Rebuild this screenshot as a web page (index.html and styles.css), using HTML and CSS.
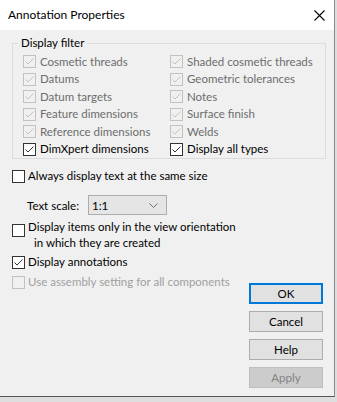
FILE: index.html
```html
<!DOCTYPE html>
<html>
<head>
<meta charset="utf-8">
<link rel="stylesheet" href="styles.css">
</head>
<body>
<div class="window">
  <div class="titlebar">
    <span class="title">Annotation Properties</span>
    <svg class="close" width="11" height="11" viewBox="0 0 11 11"><path d="M0.5 0.5 L10.5 10.5 M10.5 0.5 L0.5 10.5" stroke="#000" stroke-width="1.1" fill="none"/></svg>
  </div>
  <div class="body">
    <div class="group">
      <div class="legend">Display filter</div>
      <div class="grid">
        <div class="cb dis"><span class="box"><svg width="11" height="11" viewBox="0 0 11 11"><path d="M1.5 5.5 L4 8 L9.5 2.5" fill="none" stroke-width="1"/></svg></span>Cosmetic threads</div>
        <div class="cb dis"><span class="box"><svg width="11" height="11" viewBox="0 0 11 11"><path d="M1.5 5.5 L4 8 L9.5 2.5" fill="none" stroke-width="1"/></svg></span>Shaded cosmetic threads</div>
        <div class="cb dis"><span class="box"><svg width="11" height="11" viewBox="0 0 11 11"><path d="M1.5 5.5 L4 8 L9.5 2.5" fill="none" stroke-width="1"/></svg></span>Datums</div>
        <div class="cb dis"><span class="box"><svg width="11" height="11" viewBox="0 0 11 11"><path d="M1.5 5.5 L4 8 L9.5 2.5" fill="none" stroke-width="1"/></svg></span>Geometric tolerances</div>
        <div class="cb dis"><span class="box"><svg width="11" height="11" viewBox="0 0 11 11"><path d="M1.5 5.5 L4 8 L9.5 2.5" fill="none" stroke-width="1"/></svg></span>Datum targets</div>
        <div class="cb dis"><span class="box"><svg width="11" height="11" viewBox="0 0 11 11"><path d="M1.5 5.5 L4 8 L9.5 2.5" fill="none" stroke-width="1"/></svg></span>Notes</div>
        <div class="cb dis"><span class="box"><svg width="11" height="11" viewBox="0 0 11 11"><path d="M1.5 5.5 L4 8 L9.5 2.5" fill="none" stroke-width="1"/></svg></span>Feature dimensions</div>
        <div class="cb dis"><span class="box"><svg width="11" height="11" viewBox="0 0 11 11"><path d="M1.5 5.5 L4 8 L9.5 2.5" fill="none" stroke-width="1"/></svg></span>Surface finish</div>
        <div class="cb dis"><span class="box"><svg width="11" height="11" viewBox="0 0 11 11"><path d="M1.5 5.5 L4 8 L9.5 2.5" fill="none" stroke-width="1"/></svg></span>Reference dimensions</div>
        <div class="cb dis"><span class="box"><svg width="11" height="11" viewBox="0 0 11 11"><path d="M1.5 5.5 L4 8 L9.5 2.5" fill="none" stroke-width="1"/></svg></span>Welds</div>
        <div class="cb"><span class="box"><svg width="11" height="11" viewBox="0 0 11 11"><path d="M1.5 5.5 L4 8 L9.5 2.5" fill="none" stroke-width="1"/></svg></span>DimXpert dimensions</div>
        <div class="cb"><span class="box"><svg width="11" height="11" viewBox="0 0 11 11"><path d="M1.5 5.5 L4 8 L9.5 2.5" fill="none" stroke-width="1"/></svg></span>Display all types</div>
      </div>
    </div>
    <div class="lower">
      <div class="options">
        <div class="cb main row-always"><span class="box"></span>Always display text at the same size</div>
        <div class="scale-row">
          <span class="scale-label">Text scale:</span>
          <div class="select"><span>1:1</span><svg width="9" height="5" viewBox="0 0 9 5"><path d="M0.5 0.5 L4.5 4.5 L8.5 0.5" fill="none" stroke="#707070" stroke-width="1"/></svg></div>
        </div>
        <div class="cb main multi row-items"><span class="box"></span><div class="lines"><div>Display items only in the view orientation</div><div class="indent">in which they are created</div></div></div>
        <div class="cb main row-annot"><span class="box"><svg width="11" height="11" viewBox="0 0 11 11"><path d="M1.5 5.5 L4 8 L9.5 2.5" fill="none" stroke-width="1"/></svg></span>Display annotations</div>
        <div class="cb main dis light row-asm"><span class="box"></span>Use assembly setting for all components</div>
      </div>
      <div class="buttons">
        <div class="btn default">OK</div>
        <div class="btn">Cancel</div>
        <div class="btn">Help</div>
        <div class="btn disabled">Apply</div>
      </div>
    </div>
  </div>
</div>
</body>
</html>
```

FILE: styles.css
```css
html, body {
  margin: 0;
  padding: 0;
}
body {
  background: #dedede;
  font-family: Lato, "Noto Sans", sans-serif;
  font-size: 11.5px;
  color: #000;
  width: 337px;
  height: 402px;
  overflow: hidden;
}
.window {
  width: 334px;
  height: 396px;
  background: #f0f0f0;
  border-right: 1px solid #8a8a8a;
  border-bottom: 1px solid #555;
  display: flex;
  flex-direction: column;
}
.titlebar {
  height: 30px;
  flex: none;
  background: #fff;
  display: flex;
  align-items: center;
  justify-content: space-between;
  padding: 0 9px 0 8px;
}
.title {
  font-size: 12px;
  line-height: 16px;
}
.close {
  display: block;
}
.body {
  flex: 1;
}
.group {
  margin: 13px 8px 0 12px;
  border: 1px solid #dcdcdc;
  height: 114px;
}
.legend {
  width: fit-content;
  margin: -9px 0 0 5px;
  padding: 0 3px;
  background: #f0f0f0;
  line-height: 16px;
  height: 16px;
}
.grid {
  margin-top: 2px;
  padding-left: 10px;
  display: grid;
  grid-template-columns: 147px 1fr;
  grid-auto-rows: 17.5px;
}
.cb {
  display: flex;
  align-items: center;
  gap: 4px;
  line-height: 16px;
  white-space: nowrap;
}
.box {
  width: 11px;
  height: 11px;
  border: 1px solid #333;
  background: #fff;
  flex: none;
  display: flex;
  align-items: center;
  justify-content: center;
}
.box svg {
  display: block;
  stroke: #333;
}
.cb.dis {
  color: #6d6d6d;
}
.cb.dis .box {
  border-color: #c2c2c2;
  background: #f0f0f0;
}
.cb.dis .box svg {
  stroke: #c2c2c2;
}
.cb.light {
  color: #a0a0a0;
}
.cb.main {
  gap: 3px;
}
.lower {
  display: flex;
  justify-content: space-between;
}
.options {
  margin-left: 12px;
  display: flex;
  flex-direction: column;
}
.row-always {
  margin-top: 9px;
  height: 16px;
}
.scale-row {
  margin-top: 11px;
  display: flex;
  align-items: center;
  height: 20px;
}
.scale-label {
  width: 61px;
  padding-left: 15px;
  flex: none;
}
.select {
  box-sizing: border-box;
  width: 79px;
  height: 20px;
  border: 1px solid #adadad;
  background: #e5e5e5;
  display: flex;
  align-items: center;
  justify-content: space-between;
  padding: 0 8px 0 3px;
}
.select svg {
  display: block;
}
.row-items {
  margin-top: 4px;
  align-items: flex-start;
}
.row-items .box {
  margin-top: 5px;
}
.indent {
  padding-left: 6px;
}
.row-annot {
  margin-top: 3px;
  height: 16px;
}
.row-asm {
  margin-top: 4px;
  height: 16px;
}
.buttons {
  margin: 124px 11px 0 0;
  display: flex;
  flex-direction: column;
  gap: 7px;
}
.btn {
  box-sizing: border-box;
  width: 74px;
  height: 21px;
  border: 1px solid #adadad;
  background: #e1e1e1;
  display: flex;
  align-items: center;
  justify-content: center;
}
.btn.default {
  border: 2px solid #0078d7;
}
.btn.disabled {
  background: #cccccc;
  border-color: #bfbfbf;
  color: #838383;
}
```
